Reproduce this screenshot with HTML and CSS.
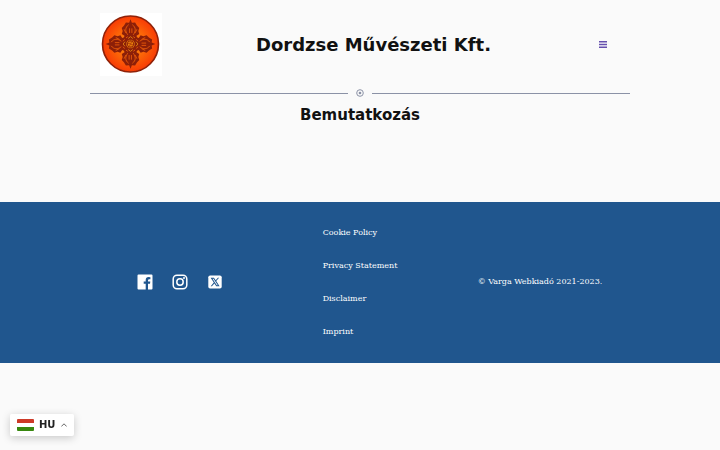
FILE: index.html
```html
<!DOCTYPE html>
<html lang="hu">
<head>
<meta charset="utf-8">
<meta name="viewport" content="width=device-width, initial-scale=1">
<title>Dordzse Művészeti Kft.</title>
<link rel="stylesheet" href="styles.css">
</head>
<body>
<header class="header container">
  <a class="logo" href="#" aria-label="Dordzse">
    <svg viewBox="0 0 62 63" width="62" height="63" aria-hidden="true">
      <defs>
        <radialGradient id="disc"><stop offset="0" stop-color="#ff9d12"/><stop offset=".5" stop-color="#fb6a08"/><stop offset="1" stop-color="#f83b05"/></radialGradient>
        <g id="arm">
          <path fill="#8c1f08" d="M0-27L1.500-23L5-23.500L7-20L9.500-17.500L8.500-14L9.500-11L6.500-9L7.500-6L4-3.500H-4L-7.500-6L-6.500-9L-9.500-11L-8.500-14L-9.500-17.500L-7-20L-5-23.500L-1.500-23Z"/>
          <path fill="none" stroke="#f0600a" d="M-2-21C-6-18-6-14-3-10M2-21C6-18 6-14 3-10M-1-17V-12M1.500-17V-12M-7-16L-5-12M7-16L5-12M-5-6.500L-3-8M5-6.500L3-8" stroke-width=".9"/>
          <path fill="none" stroke="#e58a12" d="M-2.500-6L0-8L2.500-6M-2-4H2" stroke-width=".9"/>
        </g>
      </defs>
      <path fill="#fff" d="M0 0H62V63H0Z"/>
      <circle cx="30.500" cy="31" r="28" fill="url(#disc)" stroke="#8f2108" stroke-width="1.600"/>
      <g transform="translate(30.500 31) scale(.92)">
        <use href="#arm"/><use href="#arm" transform="rotate(90)"/><use href="#arm" transform="rotate(180)"/><use href="#arm" transform="rotate(270)"/>
        <circle r="3.500" fill="#e9850c" stroke="#8c1c06"/>
        <path d="M-3 0C-1-3 1 3 3 0M0-3C3-1-3 1 0 3" fill="none" stroke="#a83208"/>
      </g>
    </svg>
  </a>
  <h1 class="title">Dordzse Művészeti Kft.</h1>
  <button class="menu" type="button" aria-label="Menü">
    <svg viewBox="0 0 8 7" width="8" height="7" aria-hidden="true"><path fill="#6650ae" d="M0 0H8V1.5H0ZM0 2.8H8V4.3H0ZM0 5.5H8V7H0Z"/></svg>
  </button>
</header>
<main class="container">
  <div class="divider">
    <svg viewBox="0 0 8 8" width="8" height="8" aria-hidden="true"><circle cx="4" cy="4" r="3.3" fill="none" stroke="#8b92a6"/><circle cx="4" cy="4" r="1.3" fill="#8b92a6"/></svg>
  </div>
  <h2 class="subtitle">Bemutatkozás</h2>
</main>
<footer class="footer">
  <div class="footer-grid container">
    <div class="social">
      <a href="#" aria-label="Facebook"><svg viewBox="0 0 16 16" width="16" height="16" aria-hidden="true"><path fill="#fff" d="M1.5.5H14.5Q15.500.500 15.500 1.500V14.500Q15.500 15.500 14.500 15.500H11V9.800H13L13.300 7.500H11V6.200Q11 5.200 12.200 5.200H13.400V3.200Q12.600 3 11.600 3Q8.700 3 8.700 5.900V7.500H6.700V9.800H8.700V15.500H1.500Q.5 15.500.5 14.500V1.500Q.5.5 1.500.5Z"/></svg></a>
      <a href="#" aria-label="Instagram"><svg viewBox="0 0 16 16" width="16" height="16" aria-hidden="true"><rect x="1.200" y="1.200" width="13.600" height="13.600" rx="3.800" fill="none" stroke="#fff" stroke-width="1.500"/><circle cx="8" cy="8" r="3.200" fill="none" stroke="#fff" stroke-width="1.500"/><circle cx="12" cy="4" r="1" fill="#fff"/></svg></a>
      <a href="#" aria-label="X"><svg viewBox="0 0 16 16" width="16" height="16" aria-hidden="true"><rect x="1.300" y="1.500" width="13.400" height="13" rx="1.800" fill="#fff"/><path fill="#20568e" fill-rule="evenodd" d="M3.600 3.800H6.900L8.700 6.300L10.900 3.800H12.100L9.200 7.100L12.600 12.200H9.300L7.400 9.400L4.900 12.200H3.700L6.800 8.500ZM5.500 4.700L9.800 11.300H10.800L6.500 4.700Z"/></svg></a>
    </div>
    <nav class="links">
      <a href="#">Cookie Policy</a>
      <a href="#">Privacy Statement</a>
      <a href="#">Disclaimer</a>
      <a href="#">Imprint</a>
    </nav>
    <p class="copyright">© Varga Webkiadó 2021-2023.</p>
  </div>
</footer>
<button class="language" type="button">
  <svg viewBox="0 0 17 12" width="17" height="12" aria-hidden="true"><rect width="17" height="12" rx="1" fill="#fff"/><path fill="#cd3a28" d="M1 0H16Q17 0 17 1V4H0V1Q0 0 1 0Z"/><path fill="#38880f" d="M0 8H17V11Q17 12 16 12H1Q0 12 0 11Z"/></svg>
  <span>HU</span>
  <svg viewBox="0 0 6 4" width="6" height="4" aria-hidden="true"><path fill="none" stroke="#666" d="M.3 3.500L3 .800L5.700 3.500"/></svg>
</button>
</body>
</html>
```
FILE: styles.css
```css
* {
  box-sizing: border-box;
}

body {
  margin: 0;
  background: #fafafa;
  color: #111;
  font: 8px/16px "DejaVu Serif", serif;
}

a {
  color: inherit;
  text-decoration: none;
}

button {
  border: 0;
  padding: 0;
  background: none;
  cursor: pointer;
}

svg {
  display: block;
}

.container {
  width: 75%;
  margin: 0 auto;
}

.header {
  display: grid;
  grid-template-columns: 15% 75% 10%;
  align-items: center;
  justify-items: center;
  padding: 13px 0 12px;
}

.title,
.subtitle {
  margin: 0;
  font-family: "DejaVu Sans", sans-serif;
  font-weight: 700;
  text-align: center;
}

.title {
  font-size: 18px;
  line-height: 24px;
}

.subtitle {
  padding-top: 6px;
  font-size: 15px;
  line-height: 22px;
}

.divider {
  display: flex;
  align-items: center;
  gap: 8px;
  height: 10px;
}

.divider::before,
.divider::after {
  content: "";
  flex: 1;
  height: 1px;
  background: #8b92a6;
}

.footer {
  margin-top: 76px;
  padding: 14px 0 15px;
  background: #20568e;
  color: #fff;
}

.footer-grid {
  display: grid;
  grid-template-columns: repeat(3, 1fr);
  align-items: center;
  justify-items: center;
}

.social {
  display: flex;
  gap: 19px;
}

.links {
  display: grid;
  line-height: 33px;
}

.copyright {
  margin: 0;
}

.language {
  position: fixed;
  bottom: 14px;
  left: 10px;
  display: flex;
  align-items: center;
  gap: 5px;
  padding: 3px 7px;
  border-radius: 2px;
  background: #fff;
  box-shadow: 0 2px 8px rgb(0 0 0 / 20%);
  color: #222;
  font: 700 10px/16px "DejaVu Sans", sans-serif;
}
```
